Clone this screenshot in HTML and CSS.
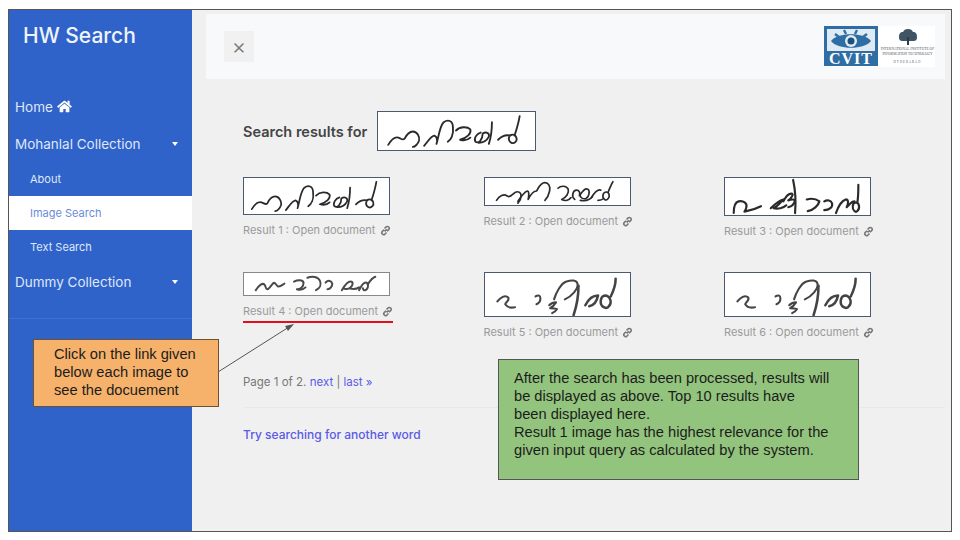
FILE: index.html
```html
<!DOCTYPE html>
<html lang="en">

<head>
    <meta charset="UTF-8">
    <meta name="viewport" content="width=device-width, initial-scale=1.0">
    <title>HW Search</title>
    <link rel="stylesheet" href="styles.css">
</head>

<body>

    <!-- scanned handwriting samples + small icons -->
    <svg class="defs">
        <symbol id="word1" viewBox="0 0 147 37">
            <path d="M7 32C10 27 14 24 17 25 20 26 21 28 23 26 25 22 28 19 31 19 35 19 38 24 37 28 36 31 33 34 31 34"/>
            <path d="M42 33C46 28 49 23 52 23 55 24 55 29 54 31 56 25 57 14 61 10 65 7 70 8 70 15 71 22 68 27 65 29"/>
            <path d="M73 18C77 14 84 14 87 17 88 21 84 25 77 27 81 28 85 27 87 25"/>
            <path d="M97 20C93 21 90 26 92 29 95 31 99 27 99 21 102 19 106 20 105 24 103 28 99 30 95 30"/>
            <path d="M108 10C108 17 107 25 105 31"/>
            <path d="M114 27C118 23 122 22 126 23M127 30C123 28 124 22 128 22 132 22 133 27 131 29 129 31 127 30 127 30M130 23C132 17 134 10 135 4"/>
        </symbol>
        <symbol id="word2" viewBox="0 0 147 29">
            <path d="M8 24c3-5 8-7 11-5 2 2 4 1 7-2 3-3 7-3 8 0 1 4-1 8-3 10"/>
            <path d="M31 25c4-6 7-10 10-11 2 0 2 4 1 9 3-6 6-9 9-9 2-3 4-9 9-9 4 0 6 4 5 9-1 5-3 8-5 10"/>
            <path d="M74 11c3-3 9-3 11 1 1 4-2 9-7 11 4 2 8 1 10-2"/>
            <path d="M92 23c-4-3-2-10 2-10 3 0 4 3 3 6 3-4 6-9 9-7 3 2 1 9-2 10-3 1-6-1-6-3M98 24c5 1 10 0 13-4"/>
            <path d="M110 21c3-5 7-9 10-8M124 23c-3-2-2-8 2-8 3 0 4 5 2 7-1 2-3 2-4 1M128 15c2-5 3-8 5-11M117 24c3 0 5-1 6-2"/>
        </symbol>
        <symbol id="word3" viewBox="0 0 147 38">
            <path d="M8 36C8 30 9 25 13 24 18 23 22 26 21 30 20 35 17 35 21 34 27 33 32 31 36 29"/>
            <path d="M46 31c4-4 9-8 13-9-3 3-6 7-10 9 4 1 10 0 13-3M59 24c2-4 5-8 8-8 3 0 1 4-3 7 3-1 6-1 7 0-1 4-3 6-7 7"/>
            <path d="M69 2c2 9 3 22 2 34"/>
            <path d="M83 22c4-1 9-1 13 2-1 4-6 9-12 10"/>
            <path d="M101 24c3-2 7-1 8 2 1 4-3 7-8 7"/>
            <path d="M113 36c2-6 6-13 10-14 3 0 3 4 1 8 3-3 5-6 8-6M132 34c-3-3-2-8 1-9 4 0 5 6 2 9-1 1-2 1-3 0M135 25c1-6 1-12 1-18"/>
        </symbol>
        <symbol id="word4" viewBox="0 0 147 23">
            <path d="M10 18c3-5 7-8 9-6 2 2 1 5 3 5 2 0 3-3 6-6 2-2 3 1 5 3 2 1 4-1 7-3"/>
            <path d="M50 9c4-2 9-2 10 1 0 4-3 7-7 7 3 1 7 0 9-2M64 5c5-2 11-1 13 3 2 4 0 8-4 10"/>
            <path d="M83 10c3-3 6-2 7 1 0 3-2 6-5 6"/>
            <path d="M100 18c3-5 6-9 9-9 3 0 3 4 0 6-2 2-5 2-7 1M108 16c3 1 7 1 10-1M118 18c2-4 4-8 7-8 3 0 3 5 1 7-2 2-4 1-4-1"/>
            <path d="M127 12c2-3 5-7 8-8"/>
        </symbol>
        <symbol id="word5" viewBox="0 0 147 44">
            <path d="M12 29c3-4 8-7 11-4 2 3-3 5-3 7 2 3 6 4 10 3"/>
            <path d="M51 24c3-2 5-1 5 2 0 3-2 5-4 6"/>
            <path d="M65 33c3-3 5-3 7-3-2 3-4 5-6 6 3 0 5 0 7 1-1 2-3 3-5 4M70 27c2-7 7-16 12-18 6-2 11-2 12 2 1 5-6 13-13 16"/>
            <path d="M95 13c0 11-2 21-5 30" stroke-width="2.6"/>
            <path d="M102 33c3-6 8-10 13-10-1 5-4 10-9 11M121 35c-5-2-4-11 1-12 5 0 8 7 4 11-1 2-3 2-5 1M128 24c3-6 5-12 5-18" stroke-width="2.6"/>
        </symbol>
        <symbol id="home" viewBox="0 0 576 512">
            <path d="M280 148 96 300v164c0 9 7 16 16 16l112-.3c9 0 16-7 16-16V368c0-9 7-16 16-16h64c9 0 16 7 16 16v96c0 9 7 16 16 16l112 .3c9 0 16-7 16-16V300L296 148c-4-4-12-4-16 0zM572 251l-84-69V44c0-7-5-12-12-12h-56c-7 0-12 5-12 12v72l-89-74c-18-14-43-14-61 0L4 251c-5 4-6 12-2 17l26 31c4 5 12 6 17 2L280 107c4-4 12-4 16 0l235 194c5 4 13 3 17-2l26-31c4-5 3-13-2-17z"/>
        </symbol>
        <symbol id="chain" viewBox="0 0 12 12">
            <path d="M5 7 7.4 4.6M4.4 5.2 2.6 7a2 2 0 0 0 2.8 2.9l1.7-1.8M7.6 6.8l1.8-1.8A2 2 0 0 0 6.6 2.1L4.9 3.9"/>
        </symbol>
    </svg>

    <div class="frame">

        <nav class="sidebar">
            <h3 class="brand">HW Search</h3>
            <ul class="menu">
                <li class="menu-item">Home <svg class="home-icon"><use href="#home"/></svg></li>
                <li class="menu-item">Mohanlal Collection <span class="caret"></span></li>
                <li class="sub-item">About</li>
                <li class="sub-item active">Image Search</li>
                <li class="sub-item">Text Search</li>
                <li class="menu-item">Dummy Collection <span class="caret"></span></li>
            </ul>
        </nav>

        <main class="main">
            <header class="navbar">
                <button class="close-btn">&times;</button>
                <div class="logos">
                    <svg class="cvit-logo" viewBox="0 0 54 40">
                        <rect width="54" height="40" fill="#2f6ea5"/>
                        <rect x="3" y="3" width="48" height="22" fill="#dfeaf2"/>
                        <path d="M7 15c6-9 34-9 40 0-6 9-34 9-40 0z" fill="#2f6ea5"/>
                        <circle cx="27" cy="15" r="6" fill="#dfeaf2"/>
                        <circle cx="27" cy="15" r="3.5" fill="#1d4f7d"/>
                        <path d="M11 8l4 3M20 4l2 4M33 4l-2 4M43 8l-4 3" stroke="#2f6ea5" stroke-width="2.4"/>
                        <text x="27" y="37.500" text-anchor="middle" class="cvit-text">CVIT</text>
                    </svg>
                    <div class="iiit">
                        <svg class="tree" viewBox="0 0 24 18">
                            <path d="M12 1c3 0 4 1 5 3 3 0 4 2 4 5s-1 4-4 4H7c-3 0-4-1-4-4s1-5 4-5c1-2 2-3 5-3z" fill="#3f5566"/>
                            <path d="M11 9h2v8h-2z" fill="#2c3c48"/>
                        </svg>
                        <span class="iiit-name">INTERNATIONAL INSTITUTE OF<br>INFORMATION TECHNOLOGY</span>
                        <span class="iiit-city">HYDERABAD</span>
                    </div>
                </div>
            </header>

            <section class="content">
                <div class="query">
                    <h5 class="query-label">Search results for</h5>
                    <svg class="scan query-scan"><use href="#word1"/></svg>
                </div>

                <div class="results">
                    <div class="result">
                        <svg class="scan h38"><use href="#word1"/></svg>
                        <p class="caption">Result 1 : Open document <svg class="chain"><use href="#chain"/></svg></p>
                    </div>
                    <div class="result">
                        <svg class="scan h29"><use href="#word2"/></svg>
                        <p class="caption">Result 2 : Open document <svg class="chain"><use href="#chain"/></svg></p>
                    </div>
                    <div class="result">
                        <svg class="scan h39 bold"><use href="#word3"/></svg>
                        <p class="caption">Result 3 : Open document <svg class="chain"><use href="#chain"/></svg></p>
                    </div>
                    <div class="result">
                        <svg class="scan h24 gray"><use href="#word4"/></svg>
                        <p class="caption">Result 4 : Open document <svg class="chain"><use href="#chain"/></svg></p>
                    </div>
                    <div class="result">
                        <svg class="scan h45 soft"><use href="#word5"/></svg>
                        <p class="caption">Result 5 : Open document <svg class="chain"><use href="#chain"/></svg></p>
                    </div>
                    <div class="result">
                        <svg class="scan h45 soft"><use href="#word5"/></svg>
                        <p class="caption">Result 6 : Open document <svg class="chain"><use href="#chain"/></svg></p>
                    </div>
                </div>

                <p class="pager">Page 1 of 2. <a class="link">next</a> | <a class="link">last &raquo;</a></p>
                <hr class="divider">
                <a class="link try-again">Try searching for another word</a>
            </section>
        </main>

        <!-- slide annotations on top of the screenshot -->
        <div class="red-line"></div>
        <svg class="arrow" viewBox="0 0 78 52">
            <path d="M0 50 71 5" stroke="#555" stroke-width="1" fill="none"/>
            <path d="M76 2 67 4 70 9z" fill="#555"/>
        </svg>
        <div class="note note-orange">Click on the link given below each image to see the docuement</div>
        <div class="note note-green">After the search has been processed, results will be displayed as above. Top 10 results have been&nbsp;displayed here.<br>Result 1 image has the highest relevance for the given input query as calculated by the system.</div>
    </div>

</body>

</html>
```

FILE: styles.css
```css
* {
    box-sizing: border-box;
}

body {
    margin: 0;
    background-color: #fff;
    font-family: Inter, "Open Sans", sans-serif;
}

.defs {
    display: none;
}

.frame {
    position: relative;
    display: flex;
    width: 944px;
    height: 523px;
    margin: 9px 0 0 8px;
    border: 1px solid #555;
    background-color: #f0f0f1;
    overflow: hidden;
}

/* sidebar */

.sidebar {
    width: 183px;
    flex-shrink: 0;
    background-color: #3063c9;
    color: #fff;
}

.brand {
    height: 78px;
    margin: 0;
    padding: 10px 0 0 14px;
    font-size: 21px;
    line-height: 32px;
    font-weight: 500;
    color: #eef3fc;
}

.menu {
    margin: 0;
    padding: 0 0 19px;
    list-style: none;
    border-bottom: 1px solid #3f70d2;
}

.menu-item {
    display: flex;
    align-items: center;
    height: 37px;
    padding-left: 6px;
    font-size: 13.5px;
    color: #dfe7f9;
    white-space: pre;
}

.menu-item:last-child {
    height: 35px;
}

.sub-item {
    display: flex;
    align-items: center;
    height: 34px;
    padding-left: 21px;
    font-size: 11px;
    color: #dfe7f9;
}

.sub-item.active {
    background-color: #fff;
    color: #6a8cd8;
}

.home-icon {
    width: 15px;
    height: 13px;
    fill: #fff;
}

.caret {
    margin-left: auto;
    margin-right: 14px;
    border-top: 4px solid #fff;
    border-left: 3.500px solid transparent;
    border-right: 3.500px solid transparent;
}

/* main */

.main {
    flex: 1;
    min-width: 0;
}

.navbar {
    display: flex;
    align-items: center;
    justify-content: space-between;
    height: 65px;
    margin: 4px 6px 0 14px;
    padding: 0 10px 0 18px;
    background-color: #f8f9fa;
}

.close-btn {
    width: 30px;
    height: 31px;
    padding: 0;
    border: none;
    background-color: #f1f1f1;
    color: #777;
    font-family: Inter, sans-serif;
    font-size: 22px;
    font-weight: 300;
    line-height: 31px;
}

.logos {
    display: flex;
    align-items: flex-start;
    gap: 2px;
    height: 41px;
    background-color: #fff;
}

.cvit-logo {
    display: block;
    width: 54px;
    height: 40px;
}

.cvit-text {
    font-family: "Liberation Serif", serif;
    font-size: 16px;
    font-weight: bold;
    fill: #fff;
    letter-spacing: 1px;
}

.iiit {
    display: flex;
    flex-direction: column;
    align-items: center;
    width: 55px;
    padding-top: 2px;
    font-family: "Liberation Serif", serif;
    color: #4e5964;
    text-align: center;
}

.tree {
    width: 24px;
    height: 18px;
}

.iiit-name {
    margin-top: 1px;
    font-size: 3.6px;
    line-height: 5px;
    white-space: nowrap;
}

.iiit-city {
    margin-top: 3px;
    font-size: 3px;
    letter-spacing: 1px;
}

.content {
    padding: 32px 6px 0 51px;
}

.query {
    display: flex;
    align-items: center;
    gap: 4px;
}

.query-label {
    width: 130px;
    margin: 0;
    font-size: 14.5px;
    font-weight: 600;
    color: #444;
    white-space: nowrap;
}

.scan {
    display: block;
    width: 147px;
    background-color: #fff;
    border: 1px solid #4a5a70;
    fill: none;
    stroke: #2a2a2a;
    stroke-width: 1.8;
    stroke-linecap: round;
    stroke-linejoin: round;
}

.scan.bold {
    stroke-width: 2.2;
}

.scan.gray {
    border-color: #888;
    stroke: #4a4a4a;
    stroke-width: 2.1;
}

.scan.soft {
    stroke: #444;
    stroke-width: 2.1;
}

.query-scan {
    width: 159px;
    height: 40px;
}

.h24 { height: 24px; }
.h29 { height: 29px; }
.h38 { height: 38px; }
.h39 { height: 39px; }
.h45 { height: 45px; }

.results {
    display: grid;
    grid-template-columns: repeat(3, 240.5px);
    grid-auto-rows: 95px;
    margin-top: 26px;
}

.caption {
    display: flex;
    align-items: center;
    gap: 1px;
    margin: 8px 0 0;
    font-size: 11px;
    line-height: 14px;
    color: #9a9a9a;
    white-space: pre;
}

.chain {
    width: 11px;
    height: 11px;
    fill: none;
    stroke: #777;
    stroke-width: 1.7;
}

.pager {
    height: 30px;
    margin: 0;
    font-size: 11.5px;
    line-height: 30px;
    color: #777;
}

.link {
    color: #5a5ae6;
}

.divider {
    height: 1px;
    margin: 10px 0 18px;
    border: none;
    background-color: #e8e8e9;
}

.try-again {
    display: block;
    font-size: 12px;
    line-height: 18px;
    font-weight: 500;
}

/* annotations */

.note {
    position: absolute;
    font-family: "Liberation Sans", sans-serif;
    font-size: 14.67px;
    line-height: 18px;
    color: #1c1c1c;
    border: 1px solid #555;
}

.note-orange {
    left: 24px;
    top: 329px;
    width: 186px;
    height: 68px;
    padding: 5px 6px 0 20px;
    background-color: #f6b26b;
    border-color: #6b5233;
}

.note-green {
    left: 489px;
    top: 349px;
    width: 361px;
    height: 121px;
    padding: 9px 15px 0 15px;
    background-color: #93c47d;
}

.red-line {
    position: absolute;
    left: 234px;
    top: 311px;
    width: 150px;
    height: 2px;
    background-color: #e0101c;
}

.arrow {
    position: absolute;
    left: 209px;
    top: 312px;
    width: 78px;
    height: 52px;
}
```
